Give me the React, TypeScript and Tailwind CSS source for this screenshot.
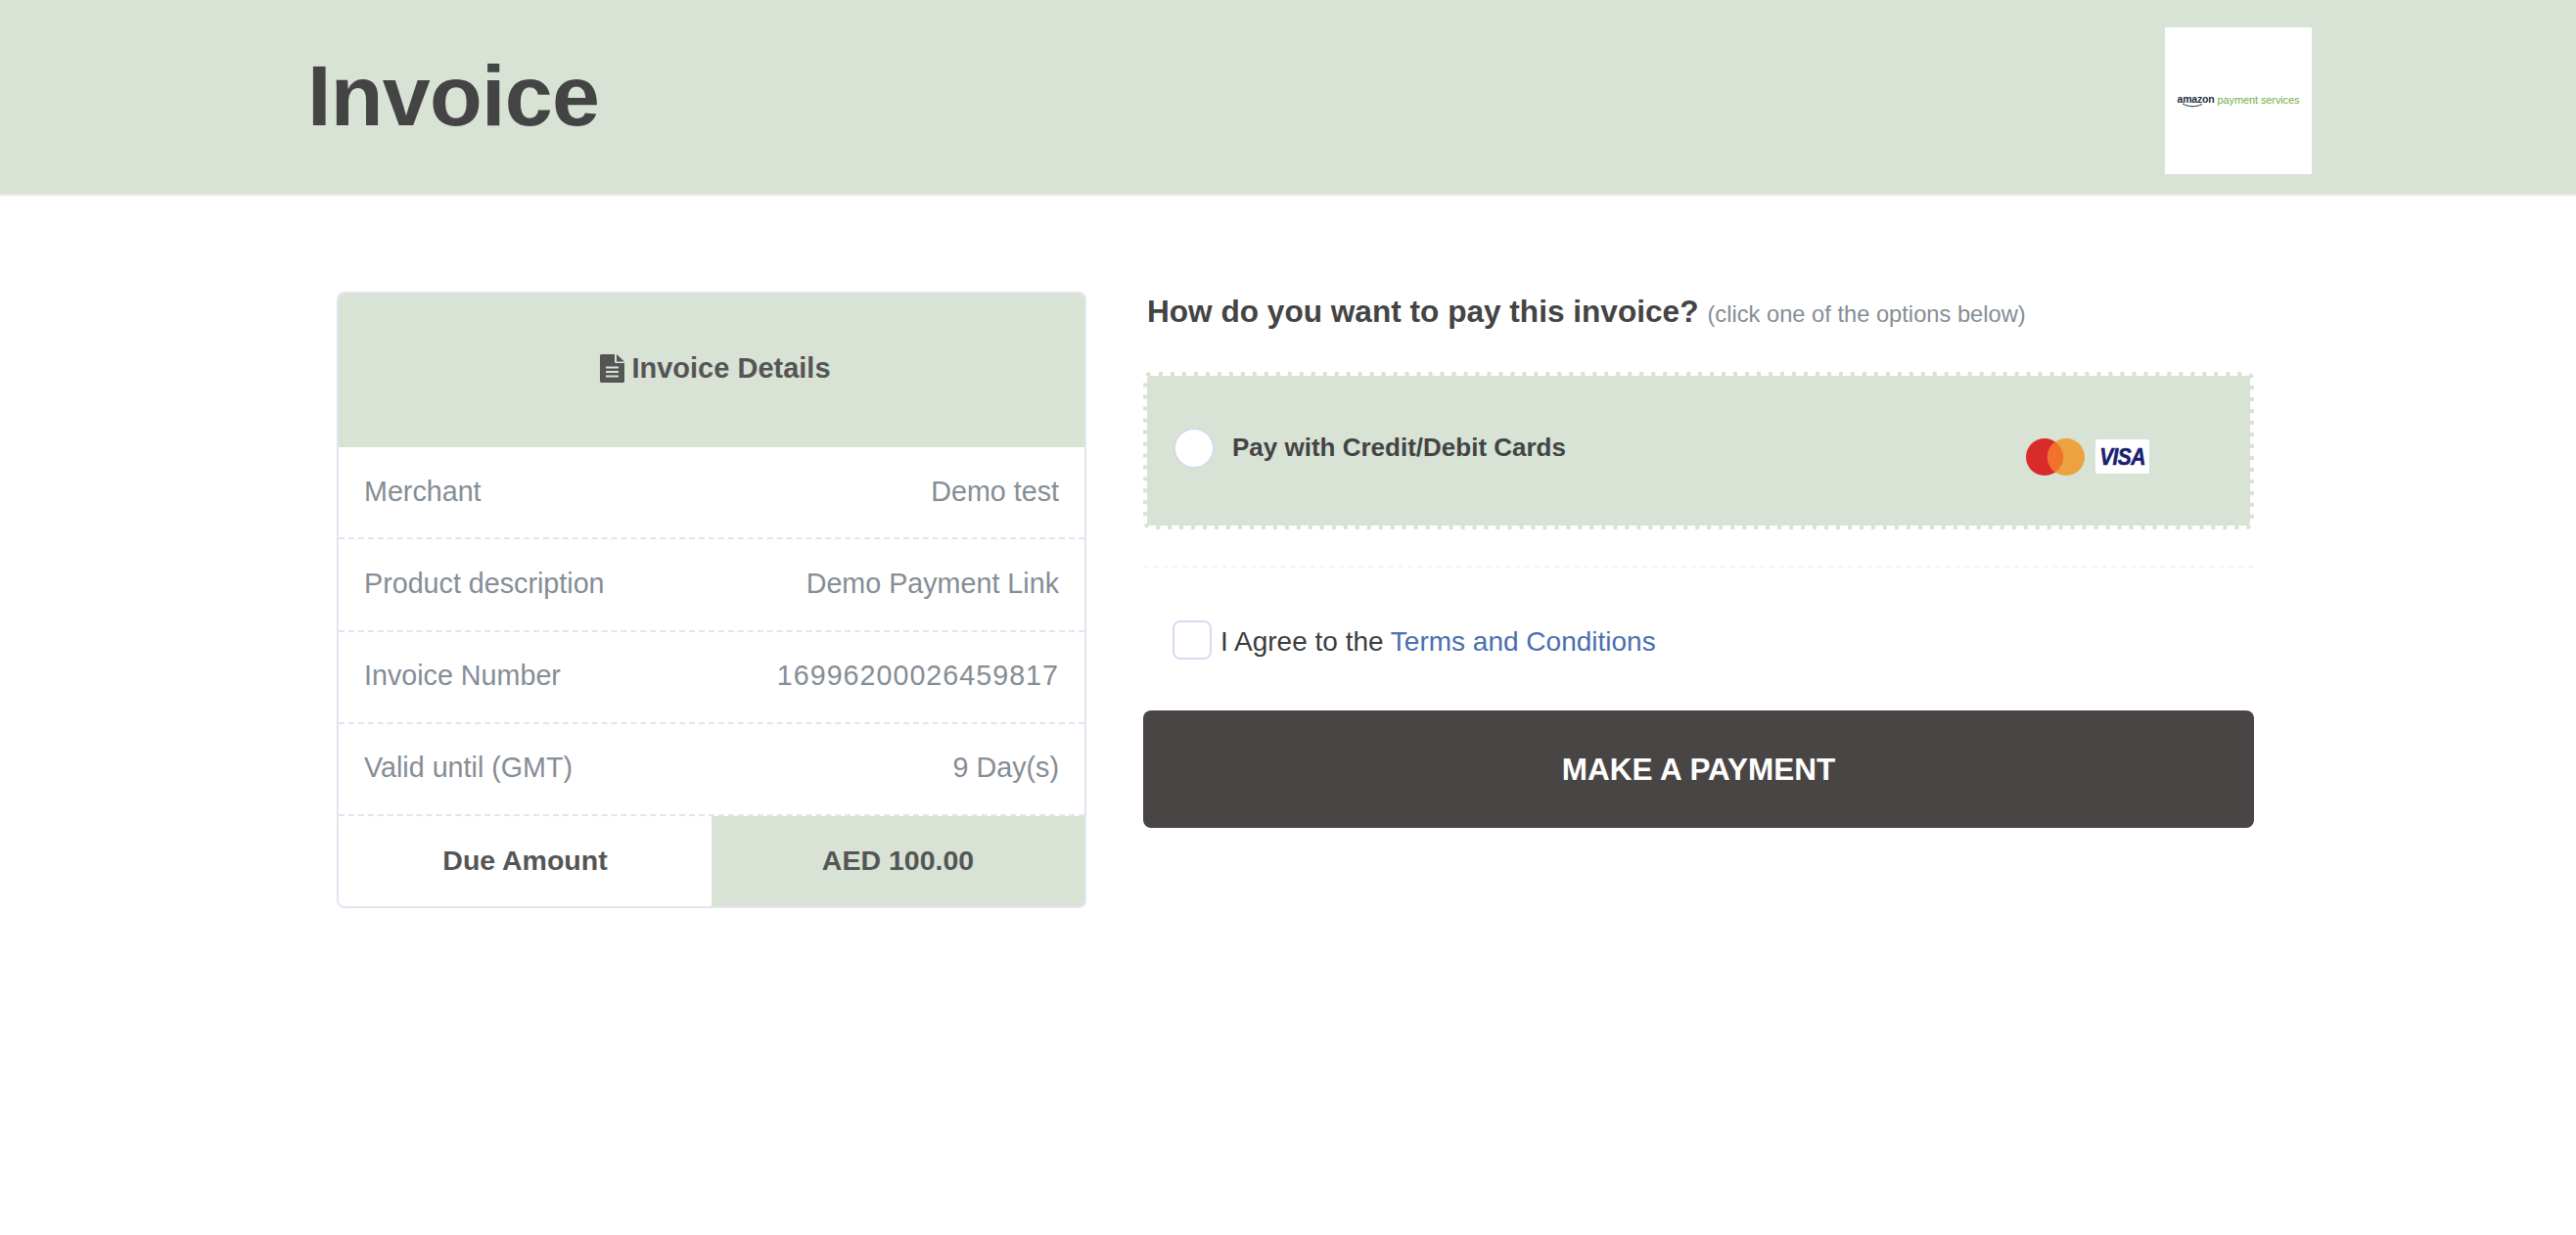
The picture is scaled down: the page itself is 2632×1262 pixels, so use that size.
const rows = [
  { label: "Merchant", value: "Demo test", spacing: "" },
  { label: "Product description", value: "Demo Payment Link", spacing: "" },
  { label: "Invoice Number", value: "16996200026459817", spacing: "tracking-[1px]" },
  { label: "Valid until (GMT)", value: "9 Day(s)", spacing: "" },
];

const App = () => {
  return (
    <div className="min-h-[1262px] bg-white font-['Liberation_Sans',Arial,sans-serif]">
      {/* top banner */}
      <div className="h-[200px] bg-[#d8e2d5] border-b-2 border-[#e6ebe5]">
        <div className="ml-[270px] w-[2092px] h-full flex items-center justify-between">
          <h1 className="pl-[44px] mb-[2px] text-[88px] tracking-[-0.7px] leading-none font-bold text-[#444444]">Invoice</h1>
          <div className="mt-[8px] w-[150px] h-[150px] bg-white flex items-center justify-center gap-[3px] whitespace-nowrap pb-[2px]">
            <span className="relative text-[10.5px] font-bold tracking-[-0.2px] text-[#232f3e]">
              amazon
              <svg className="absolute left-[4px] top-[11px]" width="24" height="5" viewBox="0 0 24 5">
                <path d="M1 1 C7 4.5 15 4.5 21 1.5" stroke="#232f3e" strokeWidth="1" fill="none" />
              </svg>
            </span>
            <span className="text-[11px] tracking-[-0.1px] text-[#6fb048]">payment services</span>
          </div>
        </div>
      </div>

      <div className="ml-[344px] mt-[98px] flex gap-[58px] items-start">
        {/* invoice details card */}
        <div className="w-[766px] rounded-lg border-2 border-[#e2e4ef] overflow-hidden">
          <div className="h-[157px] pb-[4px] pl-[8px] bg-[#d8e2d5] flex items-center justify-center gap-[7px] text-[29px] font-bold text-[#555555]">
            <svg width="25" height="29" viewBox="0 0 25 29" fill="currentColor">
              <path d="M1.5 0 H15 V7.5 a1.5 1.5 0 0 0 1.5 1.5 H25 V27.5 a1.5 1.5 0 0 1 -1.5 1.5 H1.5 a1.5 1.5 0 0 1 -1.5 -1.5 V1.5 a1.5 1.5 0 0 1 1.5 -1.5 Z" />
              <path d="M17 0 L25 7.5 H17 Z" />
              <path d="M6 12.5 H19 V14.5 H6 Z M6 17 H19 V19 H6 Z M6 21.5 H19 V23.5 H6 Z" fill="#d8e2d5" />
            </svg>
            <span>Invoice Details</span>
          </div>
          {rows.map((row) => (
            <div key={row.label} className="h-[94.25px] px-[26px] pb-[2px] flex items-center justify-between border-b-2 border-dashed border-[#e2e4ef] text-[28.7px] text-[#858d95]">
              <span>{row.label}</span>
              <span className={row.spacing}>{row.value}</span>
            </div>
          ))}
          <div className="h-[92px] pb-[2px] flex text-[28.5px] font-bold text-[#555555]">
            <div className="w-1/2 flex items-center justify-center">Due Amount</div>
            <div className="w-1/2 -mb-[2px] pb-[2px] bg-[#d8e2d5] flex items-center justify-center">AED 100.00</div>
          </div>
        </div>

        {/* payment options */}
        <div className="w-[1135px]">
          <div className="h-[40px] -mt-[3px] pl-[4px] flex items-baseline gap-[9px] text-[#444444]">
            <span className="text-[31.6px] font-bold">How do you want to pay this invoice?</span>
            <span className="text-[23.7px] text-[#858d95]">(click one of the options below)</span>
          </div>
          <div className="mt-[45px] h-[161px] rounded-lg border-4 border-dashed border-white bg-[#d8e2d5] flex items-center pl-[27px] pr-[103px]">
            <div className="w-[42px] h-[42px] rounded-full bg-white border-2 border-[#d5d9ec] mb-[6px]" />
            <span className="ml-[18px] mb-[6px] text-[26px] font-bold text-[#444444]">Pay with Credit/Debit Cards</span>
            <div className="ml-auto mt-[12px] flex items-center gap-[11px]">
              <svg width="60" height="38" viewBox="0 0 60 38">
                <circle cx="19" cy="19" r="19" fill="#da2b2b" />
                <circle cx="41" cy="19" r="19" fill="#eca23f" />
                <path d="M30 3.4 A19 19 0 0 1 30 34.6 A19 19 0 0 1 30 3.4 Z" fill="#f2712c" />
              </svg>
              <div className="w-[55px] h-[35px] bg-white rounded-[2px] flex items-center justify-center text-[21px] leading-none font-bold italic tracking-[-0.6px] text-[#1a1f71] [-webkit-text-stroke:0.5px_#1a1f71]">
                <span className="scale-y-115">VISA</span>
              </div>
            </div>
          </div>
          <div className="mt-[37px] border-t-2 border-dashed border-[#f3f4f8]" />
          <div className="mt-[51px] pl-[30px] flex items-center gap-[10px]">
            <div className="w-[40px] h-[40px] rounded-lg border-2 border-[#d5dcef] bg-white" />
            <span className="mt-[4px] -ml-[1px] text-[28px] text-[#3c3c3c]">
              I Agree to the <a className="text-[#4a6fb0]">Terms and Conditions</a>
            </span>
          </div>
          <button className="mt-[49px] w-full h-[120px] pt-[2px] rounded-lg bg-[#494544] text-white text-[31.5px] font-bold">MAKE A PAYMENT</button>
        </div>
      </div>
    </div>
  );
};

export default App;
